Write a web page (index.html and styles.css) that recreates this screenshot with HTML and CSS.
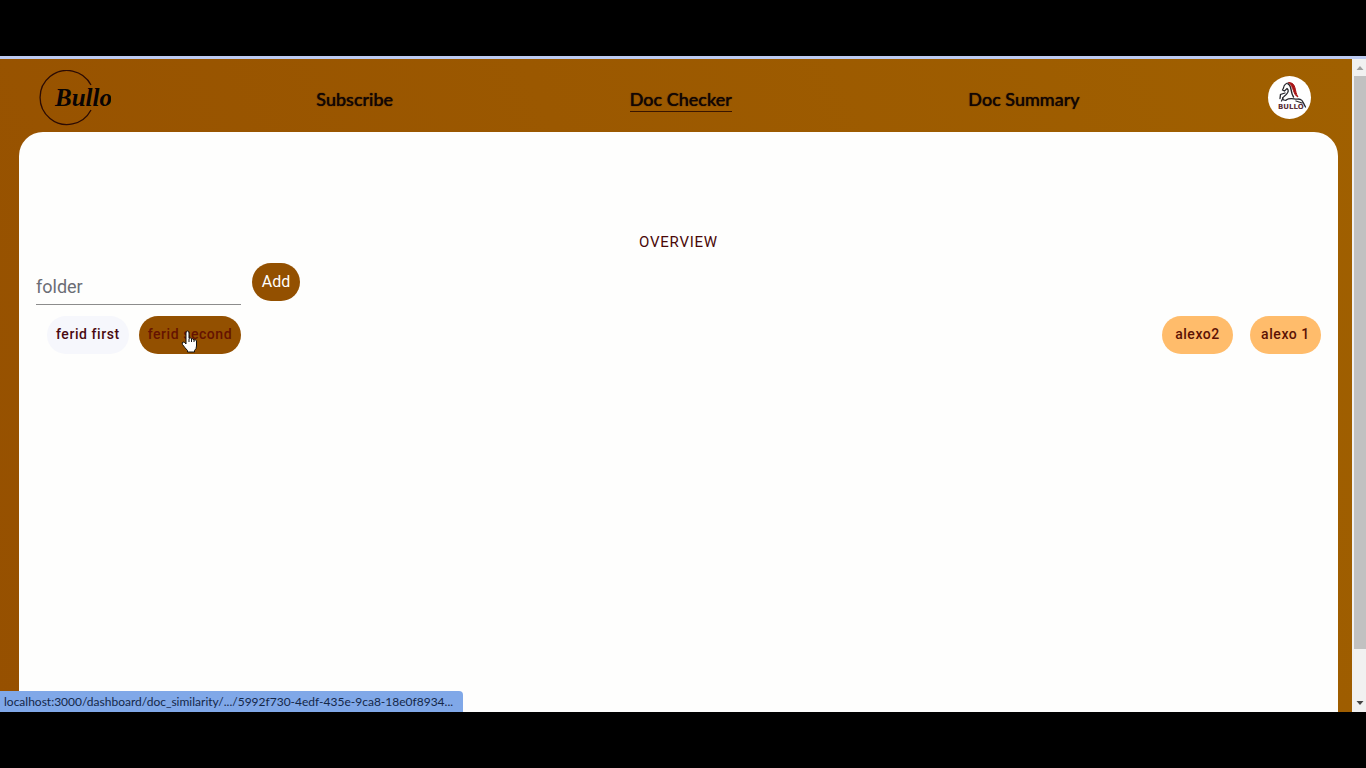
FILE: index.html
```html
<!DOCTYPE html>
<html lang="en">
<head>
<meta charset="utf-8">
<meta name="viewport" content="width=device-width, initial-scale=1">
<title>Bullo – Doc Checker</title>
<link rel="stylesheet" href="styles.css">
</head>
<body>
<div class="window">
  <div class="app">
    <header class="header">
      <a class="logo" href="#" aria-label="Bullo home">
        <svg width="72" height="56" viewBox="0 0 72 56">
          <path d="M52 15A27 27 0 1 0 52 40" fill="none" stroke="#2b0b04" stroke-width="1.300"/>
          <text class="logo-text" x="16" y="36">Bullo</text>
        </svg>
      </a>
      <nav class="nav">
        <a class="nav-link" href="#">Subscribe</a>
        <a class="nav-link nav-link-active" href="#">Doc Checker</a>
        <a class="nav-link" href="#">Doc Summary</a>
      </nav>
      <button class="avatar" type="button" aria-label="Account">
        <svg width="43" height="43" viewBox="0 0 43 43" fill="none" stroke-linecap="round">
          <path d="M21 7C18 7 16 9 15.500 12L14.500 14L16.500 15L19 12.500C22 15 19 18 16 20.500C13.500 22 14 24.500 18 24.500" stroke="#26262c" stroke-width="1.200"/>
          <path d="M20 8C24 9 22 16 25.500 21" stroke="#29262b" stroke-width="1.400"/>
          <path d="M21 6.500C29 7 26 15 30 21C25 19 26 11 21 6.500Z" fill="#a81416" stroke="#a81416" stroke-width="1"/>
          <path d="M17 17L12.500 18.500L12 22.500M13.500 25L15 22M18 24C23 21 27 24 30 23C35 23 35 27 37.500 31M28 25L34 27" stroke="#26262c" stroke-width="1.300"/>
          <text class="avatar-text" x="10" y="33">BULLO</text>
        </svg>
      </button>
    </header>
    <main class="panel">
      <h1 class="title">OVERVIEW</h1>
      <form class="add-form">
        <input class="folder-input" type="text" placeholder="folder" aria-label="folder">
        <button class="add-button" type="button">Add</button>
      </form>
      <div class="folders">
        <div class="folder-group">
          <a class="chip chip-plain" href="#">ferid first</a>
          <a class="chip chip-hover" href="#">ferid second
            <svg class="cursor" width="17" height="23" viewBox="0 0 17 23">
              <path d="M5 14V3Q5 1 6.500 1T8 3V8.500Q9 7.200 10.500 8.500V9Q12 8 13 10Q15 9 15.500 11V16Q15.500 19 13.500 20.500V22H6.500V20.500Q4 18 1.500 14.500Q.5 12.500 2 12Q3 11.500 5 14Z" fill="#fff" stroke="#111" stroke-width="1" stroke-linejoin="round"/>
              <path d="M8 9V12M10.500 9V12M13 10V12" stroke="#111"/>
            </svg>
          </a>
        </div>
        <div class="folder-group folder-group-shared">
          <a class="chip chip-shared" href="#">alexo2</a>
          <a class="chip chip-shared" href="#">alexo 1</a>
        </div>
      </div>
    </main>
  </div>
  <div class="scrollbar" aria-hidden="true">
    <svg class="scroll-arrow" width="12" height="17" viewBox="0 0 12 17"><path d="M2.500 11L6 7L9.500 11Z" fill="#a0a0a0"/></svg>
    <div class="scroll-track"><div class="scroll-thumb"></div></div>
    <svg class="scroll-arrow" width="12" height="17" viewBox="0 0 12 17"><path d="M2.500 6L6 10L9.500 6Z" fill="#444"/></svg>
  </div>
  <div class="status">localhost:3000/dashboard/doc_similarity/.../5992f730-4edf-435e-9ca8-18e0f8934...</div>
</div>
</body>
</html>
```
FILE: styles.css
```css
* { box-sizing: border-box; }

body {
  margin: 0;
  min-height: 100vh;
  display: flex;
  flex-direction: column;
  padding: 56px 0;
  background: #000;
  font-family: Roboto, "Liberation Sans", sans-serif;
}

a { color: inherit; text-decoration: none; }
button { font: inherit; border: 0; padding: 0; cursor: pointer; }

.window {
  position: relative;
  flex: 1;
  display: flex;
  border-top: 3px solid #bccaf0;
}

.app {
  flex: 1;
  display: flex;
  flex-direction: column;
  padding: 0 14px 0 19px;
  background: linear-gradient(65deg, #965000, #a06000);
}

.header {
  display: flex;
  align-items: center;
  height: 73px;
  padding: 4px 27px 0 20px;
}

.logo { display: flex; }

.logo-text {
  font: italic bold 25px "Liberation Serif", serif;
  fill: #080404;
}

.nav {
  flex: 1;
  display: flex;
  justify-content: space-around;
  margin: 0 70px 0 87px;
  padding-top: 4px;
}

.nav-link {
  font: 500 18px/24px Lato, sans-serif;
  color: #120604;
  text-shadow: 0 0 1px #120604;
  border-bottom: 1px solid transparent;
}

.nav-link-active { border-bottom-color: #3a1500; }

.avatar {
  display: flex;
  border-radius: 50%;
  background: #fff;
}

.avatar-text {
  font: bold 7px "DejaVu Sans", sans-serif;
  fill: #5c3038;
}

.panel {
  flex: 1;
  padding: 100px 17px 0;
  background: #fefefd;
  border-radius: 24px 24px 0 0;
}

.title {
  margin: 0;
  font-size: 15px;
  font-weight: 400;
  line-height: 20px;
  letter-spacing: 0.05em;
  text-align: center;
  color: #4a0808;
}

.add-form {
  display: flex;
  align-items: flex-start;
  gap: 11px;
  margin-top: 11px;
}

.folder-input {
  width: 205px;
  height: 42px;
  padding: 5px 0 0;
  border: 0;
  border-bottom: 1px solid #8c8c8c;
  background: transparent;
  font: 18px Roboto, sans-serif;
  color: #333;
}

.folder-input::placeholder { color: #6b6d75; opacity: 1; }

.add-button {
  width: 48px;
  height: 38px;
  padding-bottom: 2px;
  border-radius: 19px;
  background: #935000;
  color: #fff;
  font: 16px Roboto, sans-serif;
}

.folders {
  display: flex;
  justify-content: space-between;
  margin-top: 11px;
}

.folder-group {
  display: flex;
  gap: 10px;
  padding-left: 11px;
}

.folder-group-shared { gap: 17px; }

.chip {
  position: relative;
  padding: 0 9px 2px;
  border-radius: 19px;
  font-size: 14px;
  font-weight: 500;
  line-height: 36px;
  letter-spacing: 0.04em;
  text-align: center;
  color: #4a0a10;
}

.chip-plain { background: #f6f7fc; }
.chip-hover { background: #935000; color: #651300; }
.chip-shared { min-width: 71px; background: #ffbc6b; color: #5c1204; }

.cursor {
  position: absolute;
  left: 42px;
  top: 14px;
}

.scrollbar {
  display: flex;
  flex-direction: column;
  width: 14px;
  padding-left: 2px;
  background: #f1f1f1;
}

.scroll-arrow { display: block; flex: none; }
.scroll-track { flex: 1; }

.scroll-thumb {
  height: 92.5%;
  background: #c1c1c1;
}

.status {
  position: absolute;
  left: 0;
  bottom: 0;
  padding: 0 10px 0 4px;
  border-top-right-radius: 4px;
  background: #80a8e8;
  color: #142748;
  font: 12px/21px Lato, sans-serif;
}
```
